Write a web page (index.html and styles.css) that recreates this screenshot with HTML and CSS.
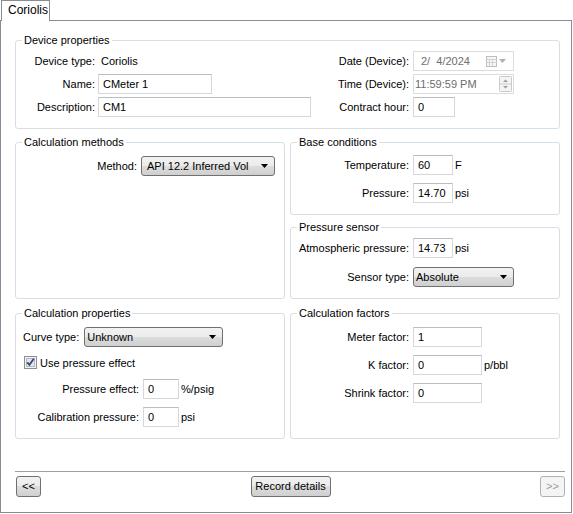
FILE: index.html
```html
<!DOCTYPE html>
<html>
<head>
<meta charset="utf-8">
<link rel="stylesheet" href="styles.css">
</head>
<body>
<div class="tabs"><div class="tab">Coriolis</div></div>
<div class="panel">
  <div class="group device">
    <span class="legend">Device properties</span>
    <div class="dev-grid">
      <span class="lbl">Device type:</span><span class="val">Coriolis</span>
      <span class="lbl r">Date (Device):</span>
      <div class="input disabled date"><span class="dtext">2/  4/2024</span>
        <svg class="cal" width="11" height="11" viewBox="0 0 11 11"><rect x="0.5" y="0.5" width="10" height="10" fill="#f6f6f6" stroke="#bdbdbd"/><path d="M0.5 3.5H10.5M0.5 6.5H10.5M3.5 3.5V10.5M6.5 3.5V10.5" stroke="#d2d2d2"/></svg>
        <svg class="darrow" width="7" height="4" viewBox="0 0 7 4"><path d="M0 0H7L3.5 4Z" fill="#b0b0b0"/></svg>
      </div>
      <span class="lbl">Name:</span><div class="input w114">CMeter 1</div>
      <span class="lbl r">Time (Device):</span>
      <div class="input disabled time"><span class="ttext">11:59:59 PM</span>
        <svg class="spin" width="13" height="16" viewBox="0 0 13 16"><rect x="0.5" y="0.5" width="12" height="15" rx="1" fill="#f4f4f4" stroke="#cacaca"/><path d="M0.5 8H12.5" stroke="#cacaca"/><path d="M4 6H9L6.5 3.5Z" fill="#9c9c9c"/><path d="M4 10H9L6.5 12.5Z" fill="#9c9c9c"/></svg>
      </div>
      <span class="lbl">Description:</span><div class="input w213">CM1</div>
      <span class="lbl r">Contract hour:</span><div class="input w42">0</div>
    </div>
  </div>

  <div class="cols">
    <div class="group methods">
      <span class="legend">Calculation methods</span>
      <div class="form lw125">
        <span class="lbl">Method:</span>
        <div class="combo w134 pad5 span2"><span>API 12.2 Inferred Vol</span><svg class="arrow" width="7" height="4" viewBox="0 0 7 4"><path d="M0 0H7L3.5 4Z" fill="#000"/></svg></div>
      </div>
    </div>
    <div class="rightcol">
      <div class="group base">
        <span class="legend">Base conditions</span>
        <div class="form lw122 gap8">
          <span class="lbl">Temperature:</span><div class="input w40">60</div><span class="unit">F</span>
          <span class="lbl">Pressure:</span><div class="input w40">14.70</div><span class="unit">psi</span>
        </div>
      </div>
      <div class="group sensor">
        <span class="legend">Pressure sensor</span>
        <div class="form lw122 gap9">
          <span class="lbl">Atmospheric pressure:</span><div class="input w40">14.73</div><span class="unit">psi</span>
          <span class="lbl">Sensor type:</span>
          <div class="combo w101 span2"><span>Absolute</span><svg class="arrow" width="7" height="4" viewBox="0 0 7 4"><path d="M0 0H7L3.5 4Z" fill="#000"/></svg></div>
        </div>
      </div>
    </div>
  </div>

  <div class="cols bottom">
    <div class="group props">
      <span class="legend">Calculation properties</span>
      <div class="curve-row">
        <span class="lbl-plain">Curve type:</span>
        <div class="combo w139"><span>Unknown</span><svg class="arrow" width="7" height="4" viewBox="0 0 7 4"><path d="M0 0H7L3.5 4Z" fill="#000"/></svg></div>
      </div>
      <div class="check-row">
        <svg class="check" width="13" height="13" viewBox="0 0 13 13"><rect x="0.5" y="0.5" width="12" height="12" fill="#f4f4f4" stroke="#8e8f8f"/><rect x="2.5" y="2.5" width="8" height="8" fill="#e4e7ec" stroke="#b3b8c1"/><path d="M3.2 6.4L5.4 8.9L9.8 2.8" fill="none" stroke="#34497a" stroke-width="1.8"/></svg>
        <span>Use pressure effect</span>
      </div>
      <div class="form lw127 gap8 mt10">
        <span class="lbl">Pressure effect:</span><div class="input w36">0</div><span class="unit">%/psig</span>
        <span class="lbl">Calibration pressure:</span><div class="input w36">0</div><span class="unit">psi</span>
      </div>
    </div>
    <div class="group factors">
      <span class="legend">Calculation factors</span>
      <div class="form lw122 gap8">
        <span class="lbl">Meter factor:</span><div class="input w69">1</div><span></span>
        <span class="lbl">K factor:</span><div class="input w69">0</div><span class="unit">p/bbl</span>
        <span class="lbl">Shrink factor:</span><div class="input w69">0</div><span></span>
      </div>
    </div>
  </div>

  <div class="footer">
    <div class="btn small">&lt;&lt;</div>
    <div class="btn wide">Record details</div>
    <div class="btn small disabled-btn">&gt;&gt;</div>
  </div>
</div>
</body>
</html>
```

FILE: styles.css
```css
* { box-sizing: border-box; }
html, body { margin: 0; padding: 0; background: #fff; }
body {
  font-family: "Liberation Sans", Arial, sans-serif;
  font-size: 11px;
  color: #000;
  width: 573px;
  height: 514px;
  overflow: hidden;
}
.tabs { height: 20px; padding-left: 1px; position: relative; z-index: 2; }
.tab {
  width: 49px;
  height: 21px;
  border: 1px solid #898c95;
  border-bottom: none;
  background: #fff;
  padding-left: 6px;
  line-height: 19px;
  font-size: 12px;
}
.panel {
  width: 572px;
  height: 493px;
  border: 1px solid #898c95;
  padding: 19px 0 0 14px;
  background: #fff;
}
.group {
  position: relative;
  border: 1px solid #d5dfe5;
  border-radius: 3px;
}
.legend {
  position: absolute;
  top: -7px;
  left: 6px;
  padding: 0 2px;
  background: #fff;
  line-height: 13px;
  font-size: 11px;
}
.device { width: 545px; padding: 10px 45px 11px 0; }
.dev-grid {
  display: grid;
  grid-template-columns: 82px 213px 1fr 101px;
  grid-auto-rows: 20px;
  row-gap: 3px;
  align-items: center;
}
.dev-grid .lbl { padding-right: 3px; }
.dev-grid .lbl.r { padding-right: 4px; }
.lbl { text-align: right; padding-right: 4px; white-space: nowrap; }
.val { padding-left: 3px; }
.input {
  height: 20px;
  border: 1px solid #d4d8de;
  border-top-color: #b9bdc3;
  padding: 0 4px;
  line-height: 18px;
  background: #fff;
  white-space: nowrap;
}
.w114 { width: 114px; }
.w213 { width: 213px; }
.w42 { width: 42px; }
.w40 { width: 40px; }
.w36 { width: 36px; }
.w69 { width: 69px; }
.w134 { width: 134px; }
.w101 { width: 101px; }
.w139 { width: 139px; }
.disabled { color: #6d6d6d; border-color: #d9dce0; display: flex; align-items: center; }
.date { width: 101px; padding: 0 7px 0 7px; }
.dtext { white-space: pre; }
.cal { margin-left: auto; margin-right: 2px; }
.time { width: 101px; padding: 0 1px 0 1px; }
.spin { margin-left: auto; }
.cols {
  display: grid;
  grid-template-columns: 270px 270px;
  column-gap: 5px;
  margin-top: 13px;
}
.cols.bottom { margin-top: 14px; }
.rightcol { display: flex; flex-direction: column; gap: 12px; }
.methods { padding-top: 13px; }
.base { padding: 12px 0 11px 0; }
.sensor { padding: 10px 0 11px 0; }
.props { padding: 13px 0 11px 0; }
.factors { padding: 13px 0 11px 0; }
.form {
  display: grid;
  grid-auto-rows: 20px;
  align-items: center;
  justify-items: start;
}
.form .lbl { justify-self: stretch; }
.span2 { grid-column: span 2; }
.lw125 { grid-template-columns: 125px auto 1fr; }
.lw122 { grid-template-columns: 122px auto 1fr; }
.lw127 { grid-template-columns: 127px auto 1fr; }
.gap8 { row-gap: 8px; }
.gap9 { row-gap: 9px; }
.mt10 { margin-top: 10px; }
.unit { padding-left: 2px; }
.combo {
  height: 20px;
  border: 1px solid #707070;
  border-radius: 3px;
  background: linear-gradient(#f2f2f2 0%, #ebebeb 50%, #dddddd 50%, #cfcfcf 100%);
  display: flex;
  align-items: center;
  padding: 0 6px 0 2px;
  white-space: nowrap;
}
.combo.pad5 { padding-left: 5px; }
.arrow { margin-left: auto; }
.curve-row { display: flex; align-items: center; gap: 5px; padding-left: 7px; }
.check-row { display: flex; align-items: center; gap: 3px; margin-top: 9px; padding-left: 8px; height: 13px; }
.check { flex: none; }
.footer {
  margin-top: 32px;
  margin-right: 6px;
  border-top: 1px solid #a0a0a0;
  padding: 4px 0 0 1px;
  display: flex;
  justify-content: space-between;
}
.btn {
  height: 21px;
  border: 1px solid #707070;
  border-radius: 3px;
  background: linear-gradient(#f2f2f2 0%, #ebebeb 50%, #dddddd 50%, #cfcfcf 100%);
  text-align: center;
  line-height: 19px;
  font-size: 11px;
}
.small { width: 25px; }
.wide { width: 80px; }
.disabled-btn {
  border-color: #adb2b5;
  background: #f4f4f4;
  color: #9a9a9a;
}
```
